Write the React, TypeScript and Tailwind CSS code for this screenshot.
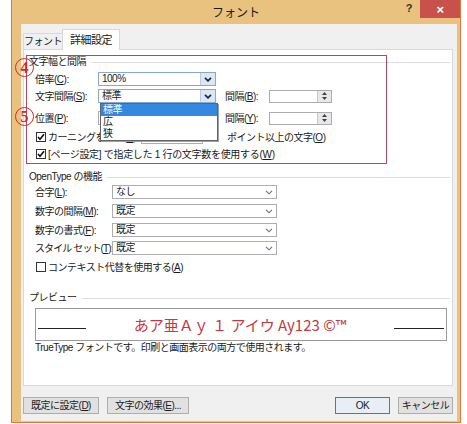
import React from 'react';

const ui = "font-['Liberation_Sans','Noto_Sans_CJK_JP',sans-serif]";

function Key({ label, k, tail = ':' }: { label: string; k: string; tail?: string }) {
  return (
    <span className="whitespace-nowrap">
      {label}(<span className="underline">{k}</span>){tail}
    </span>
  );
}

function Chevron({ bold }: { bold?: boolean }) {
  return (
    <svg width="8" height="5" viewBox="0 0 8 5">
      <polyline
        points="1,0.8 4,3.8 7,0.8"
        fill="none"
        stroke={bold ? '#1c2a48' : '#707070'}
        strokeWidth={bold ? 1.8 : 1.1}
      />
    </svg>
  );
}

function Combo({ value, className, focus }: { value: string; className: string; focus?: boolean }) {
  return (
    <div
      className={`flex h-[14px] shrink-0 items-stretch border bg-white ${focus ? 'border-[#8aa8cc]' : 'border-[#abadb3]'} ${className}`}
    >
      <span className="flex-1 truncate pl-[3px] leading-[12px]">{value}</span>
      <span
        className={`flex w-[15px] items-center justify-center ${focus ? 'border-l border-[#b6cbe3] bg-[#dde7f2]' : ''}`}
      >
        <Chevron bold={focus} />
      </span>
    </div>
  );
}

function Spinner() {
  return (
    <div className="flex h-[13px] w-[63px] shrink-0 border border-[#abadb3] bg-white">
      <span className="flex-1" />
      <span className="flex w-[14px] flex-col items-center justify-center gap-[2px] border-l border-[#c9c9c9] bg-[#e8e8e8]">
        <svg width="5" height="3" viewBox="0 0 5 3">
          <polygon points="0,3 2.5,0 5,3" fill="#404040" />
        </svg>
        <svg width="5" height="3" viewBox="0 0 5 3">
          <polygon points="0,0 2.5,3 5,0" fill="#404040" />
        </svg>
      </span>
    </div>
  );
}

function Check({ on }: { on?: boolean }) {
  return (
    <span className="flex h-[10px] w-[10px] shrink-0 items-center justify-center border border-[#333] bg-white">
      {on && (
        <svg width="8" height="8" viewBox="0 0 8 8">
          <polyline points="1,4 3,6.3 7,1.2" fill="none" stroke="#111" strokeWidth="1.6" />
        </svg>
      )}
    </span>
  );
}

function Group({ title }: { title: string }) {
  return (
    <div className="flex h-[12px] items-center gap-[5px]">
      <span className="whitespace-nowrap leading-none">{title}</span>
      <span className="h-px flex-1 bg-[#dedede]" />
    </div>
  );
}

function Circled({ n }: { n: string }) {
  return (
    <span className="flex h-[19px] w-[19px] items-center justify-center rounded-full border-[1.5px] border-[#d42a2a] font-['Liberation_Serif',serif] text-[16px] font-bold leading-none tracking-normal text-[#d42a2a]">
      {n}
    </span>
  );
}

function Btn({ children, className }: { children: React.ReactNode; className: string }) {
  return (
    <div className={`flex h-[17px] items-center justify-center border text-[10px] ${className}`}>
      {children}
    </div>
  );
}

export default function App() {
  return (
    <div
      className={`relative h-[424px] w-[467px] overflow-hidden bg-white text-[10px] tracking-[-0.5px] text-[#1a1a1a] ${ui}`}
    >
      {/* window frame */}
      <div className="ml-[11px] flex h-[423px] w-[450px] flex-col border-x border-b border-[#e2773d] bg-[#e9c27f]">
        {/* title bar */}
        <div className="grid h-[24px] grid-cols-[1fr_auto_1fr]">
          <span />
          <span className="pt-[5px] text-[12px] leading-[16px] tracking-normal">フォント</span>
          <div className="flex items-start justify-end">
            <span className="mr-[8px] mt-[2px] text-[11px] font-bold leading-[12px] text-[#333]">?</span>
            <span className="flex h-[18px] w-[40px] items-center justify-center bg-[#c9514b] text-[13px] font-bold leading-none text-white">
              ×
            </span>
          </div>
        </div>

        {/* dialog body */}
        <div className="mb-px ml-[9px] mr-[3px] flex flex-1 flex-col bg-[#f0f0f0] pl-[2px] pr-[4px]">
          {/* tabs */}
          <div className="flex items-end pt-[5px]">
            <div className="flex h-[16px] w-[40px] items-center justify-center whitespace-nowrap border border-b-0 border-[#d9d9d9] bg-[#f0f0f0]">
              フォント
            </div>
            <div className="relative z-10 -mb-px -ml-px flex h-[21px] w-[58px] items-center justify-center whitespace-nowrap border border-b-0 border-[#d9d9d9] bg-white text-[11px]">
              詳細設定
            </div>
          </div>

          {/* tab panel */}
          <div className="flex h-[337px] w-[430px] flex-col border border-[#d9d9d9] bg-white pl-[5px] pr-[2px]">
            <div className="mt-[6px]">
              <Group title="文字幅と間隔" />
            </div>
            <div className="flex flex-col pl-[6px]">
              <div className="mt-[3px] flex h-[16px] items-center">
                <span className="w-[63px] shrink-0"><Key label="倍率" k="C" /></span>
                <Combo value="100%" className="w-[118px]" focus />
              </div>
              <div className="mt-px flex h-[16px] items-center">
                <span className="w-[63px] shrink-0"><Key label="文字間隔" k="S" /></span>
                <Combo value="標準" className="w-[118px]" focus />
                <span className="ml-[9px] w-[44px] shrink-0"><Key label="間隔" k="B" /></span>
                <Spinner />
              </div>
              <div className="mt-[6px] flex h-[16px] items-center">
                <span className="w-[63px] shrink-0"><Key label="位置" k="P" /></span>
                <Combo value="標準" className="w-[118px]" />
                <span className="ml-[9px] w-[44px] shrink-0"><Key label="間隔" k="Y" /></span>
                <Spinner />
              </div>
              <div className="mt-[4px] flex h-[14px] items-center">
                <span className="ml-px"><Check on /></span>
                <span className="ml-[2px] w-[93px] shrink-0 overflow-hidden"><Key label="カーニングを行う" k="K" /></span>
                <Combo value="12" className="w-[62px] text-[#555]" />
                <span className="ml-[24px]"><Key label="ポイント以上の文字" k="O" tail="" /></span>
              </div>
              <div className="mt-[3px] flex h-[14px] items-center">
                <span className="ml-px"><Check on /></span>
                <span className="ml-[2px] tracking-[-0.3px]">
                  <Key label="[ページ設定] で指定した 1 行の文字数を使用する" k="W" tail="" />
                </span>
              </div>
            </div>

            <div className="mt-[10px]">
              <Group title="OpenType の機能" />
            </div>
            <div className="flex flex-col pl-[6px]">
              <div className="mt-px flex h-[16px] items-center">
                <span className="w-[77px] shrink-0"><Key label="合字" k="L" /></span>
                <Combo value="なし" className="w-[165px]" />
              </div>
              <div className="mt-[3px] flex h-[16px] items-center">
                <span className="w-[77px] shrink-0"><Key label="数字の間隔" k="M" /></span>
                <Combo value="既定" className="w-[165px]" />
              </div>
              <div className="mt-[3px] flex h-[16px] items-center">
                <span className="w-[77px] shrink-0"><Key label="数字の書式" k="F" /></span>
                <Combo value="既定" className="w-[165px]" />
              </div>
              <div className="mt-[2px] flex h-[16px] items-center">
                <span className="w-[77px] shrink-0 tracking-[-0.9px]"><Key label="スタイル セット" k="T" /></span>
                <Combo value="既定" className="w-[165px]" />
              </div>
              <div className="mt-[4px] flex h-[14px] items-center">
                <span className="ml-px"><Check /></span>
                <span className="ml-[2px]"><Key label="コンテキスト代替を使用する" k="A" tail="" /></span>
              </div>
            </div>

            <div className="mt-[18px]">
              <Group title="プレビュー" />
            </div>
            <div className="ml-[6px] mt-[4px] flex h-[33px] w-[412px] items-center border border-[#9a9a9a] px-[2px]">
              <span className="w-[48px] translate-y-[4px] border-b border-[#222]" />
              <span className="flex-1 text-center font-['Noto_Sans_CJK_JP',sans-serif] text-[15px] leading-none tracking-normal text-[#c2393f]">
                あア亜Ａｙ １ アイウ Ay123 ©™
              </span>
              <span className="w-[50px] translate-y-[4px] border-b border-[#222]" />
            </div>
            <div className="ml-[6px] mt-px h-[12px] leading-[12px]">
              TrueType フォントです。印刷と画面表示の両方で使用されます。
            </div>
          </div>

          {/* buttons */}
          <div className="mt-[11px] flex">
            <Btn className="w-[76px] border-[#adadad] bg-[#e1e1e1]">
              <Key label="既定に設定" k="D" tail="" />
            </Btn>
            <Btn className="ml-[8px] w-[82px] border-[#adadad] bg-[#e1e1e1]">
              <Key label="文字の効果" k="E" tail="..." />
            </Btn>
            <span className="flex-1" />
            <Btn className="w-[55px] border-[#3c7fb1] bg-[#e8eef5]">OK</Btn>
            <Btn className="ml-[8px] w-[55px] border-[#adadad] bg-[#e1e1e1]">キャンセル</Btn>
          </div>
        </div>
      </div>

      {/* open drop-down list of 文字間隔 */}
      <div className="absolute left-[100px] top-[103px] flex w-[118px] flex-col border border-[#646464] bg-white shadow-[1px_1px_0_#a0a0a0]">
        <span className="h-[12px] bg-[#3588e0] pl-[2px] leading-[12px] text-white">標準</span>
        <span className="h-[12px] pl-[2px] leading-[12px]">広</span>
        <span className="h-[12px] pl-[2px] leading-[12px]">狭</span>
      </div>

      {/* annotations */}
      <div className="pointer-events-none absolute left-[26px] top-[55px] h-[109px] w-[361px] border-[1.5px] border-[#b04a5c]" />
      <div className="absolute left-[15px] top-[58px]">
        <Circled n="4" />
      </div>
      <div className="absolute left-[15px] top-[107px]">
        <Circled n="5" />
      </div>
    </div>
  );
}
